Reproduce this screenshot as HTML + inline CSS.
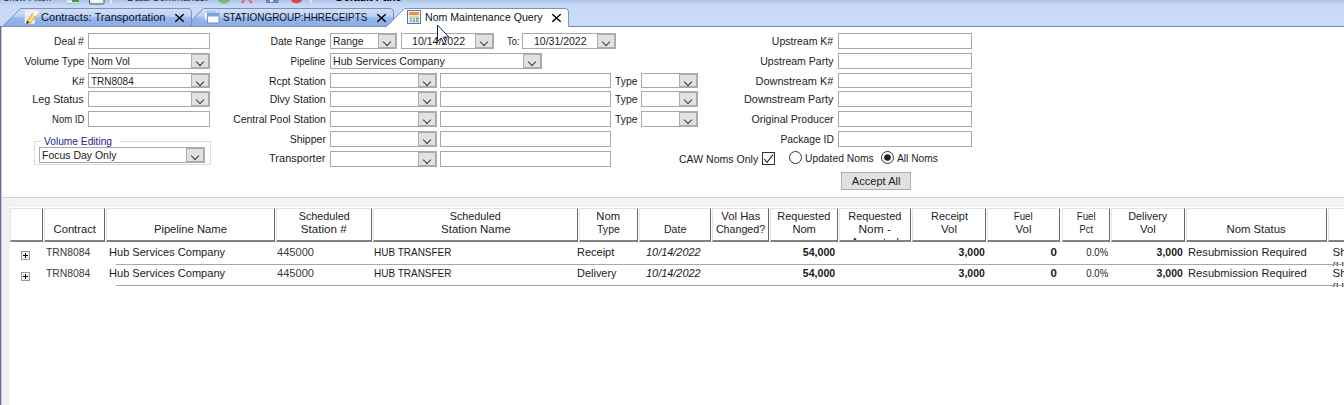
<!DOCTYPE html>
<html>
<head>
<meta charset="utf-8">
<title>Nom Maintenance Query</title>
<style>
*{box-sizing:border-box;margin:0;padding:0}
html,body{width:1344px;height:405px;overflow:hidden;background:#fff}
body{font-family:"Liberation Sans",sans-serif;font-size:11px;color:#1c1c1c;position:relative}
.abs{position:absolute}
#strip{position:absolute;left:0;top:0;width:1344px;height:27px;background:linear-gradient(#a9c3ea 0,#bed2f0 3px,#c9daf5 6px,#c9dbf8 26px)}
#stripline{position:absolute;left:0;top:26px;width:1344px;height:1px;background:#7688ad}
#leftedge{position:absolute;left:0;top:26px;width:1px;height:379px;background:#5f6f98}
#leftedge2{position:absolute;left:1px;top:27px;width:1px;height:378px;background:#c4cbdd}
#leftgray{position:absolute;left:2px;top:198px;width:8px;height:207px;background:#f3f3f3}
.tabt{position:absolute;font-size:11px;line-height:14px;white-space:nowrap;color:#0b1220}
.lbl{position:absolute;height:14px;line-height:14px;white-space:nowrap;text-align:right;font-size:11px}
.tb{position:absolute;border:1px solid #a9a9a9;background:#fff}
.cb{position:absolute;border:1px solid #a9a9a9;background:#fff;font-size:11px;padding-left:2px;white-space:nowrap;overflow:hidden}
.cb i{position:absolute;right:0;top:0;bottom:0;width:18px;background:#e1e1e1;border:1px solid #adadad}
.cb i:after{content:"";position:absolute;left:4.6px;top:4.1px;width:5px;height:5px;border-right:1px solid #3a3a3a;border-bottom:1px solid #3a3a3a;transform:rotate(45deg)}
.gh{position:absolute;top:208px;height:34px;background:#fff;border-left:1px solid #e4e4e4;border-top:1px solid #e4e4e4;border-right:1px solid #666;border-bottom:2px solid #828282;font-size:11.5px;line-height:13px;text-align:center;color:#222;overflow:hidden;white-space:nowrap}
.gc{position:absolute;height:14px;line-height:14px;font-size:11.5px;white-space:nowrap;color:#1a1a1a}
</style>
</head>
<body>
<div id="strip"></div>
<div id="stripline"></div>
<div id="leftedge"></div>
<div id="leftedge2"></div>
<div id="leftgray"></div>
<svg class="abs" style="left:0;top:0" width="1344" height="30" viewBox="0 0 1344 30">
<defs>
<linearGradient id="tg" x1="0" y1="8" x2="0" y2="26" gradientUnits="userSpaceOnUse">
<stop offset="0" stop-color="#d3e1f8"/><stop offset="0.45" stop-color="#bfd2f3"/><stop offset="0.55" stop-color="#98b6ec"/><stop offset="1" stop-color="#8aabe4"/>
</linearGradient>
</defs>
<path d="M185.5,26.5 L203.5,8.5 L390,8.5 Q393.5,8.5 393.5,12 L393.5,26.5 Z" fill="url(#tg)" stroke="#7a90be" stroke-width="1"/>
<path d="M2.5,26.5 L20.5,8.5 L188,8.5 Q191.5,8.5 191.5,12 L191.5,26.5 Z" fill="url(#tg)" stroke="#7a90be" stroke-width="1"/>
<path d="M386.5,26.5 L404.5,8.5 L565,8.5 Q568.5,8.5 568.5,12 L568.5,27.5 L386.5,27.5 Z" fill="#ffffff" stroke="none"/>
<path d="M386.5,26.5 L404.5,8.5 L565,8.5 Q568.5,8.5 568.5,12 L568.5,26.5" fill="none" stroke="#7a90be" stroke-width="1"/>
</svg>
<div class="tabt" style="left:40.5px;top:10px"><span style="display:inline-block;transform:scaleX(1.008);transform-origin:left center">Contracts: Transportation</span></div>
<div class="tabt" style="left:222.5px;top:10px"><span style="display:inline-block;transform:scaleX(0.900);transform-origin:left center">STATIONGROUP:HHRECEIPTS</span></div>
<div class="tabt" style="left:424.7px;top:10px"><span style="display:inline-block;transform:scaleX(0.961);transform-origin:left center">Nom Maintenance Query</span></div>
<svg class="abs" style="left:174px;top:13px" width="11" height="10"><path d="M1.3,1.3 L9.7,8.7 M9.7,1.3 L1.3,8.7" stroke="#000" stroke-width="1.5" fill="none"/></svg>
<svg class="abs" style="left:376px;top:13px" width="11" height="10"><path d="M1.3,1.3 L9.7,8.7 M9.7,1.3 L1.3,8.7" stroke="#000" stroke-width="1.5" fill="none"/></svg>
<svg class="abs" style="left:551px;top:13px" width="11" height="10"><path d="M1.3,1.3 L9.7,8.7 M9.7,1.3 L1.3,8.7" stroke="#000" stroke-width="1.5" fill="none"/></svg>
<div class="abs" style="left:3px;top:-10px;font-size:11px;line-height:14px;white-space:nowrap;color:#1a2540"><span style="display:inline-block;transform:scaleX(0.835);transform-origin:left center">Show Filter:</span></div>
<div class="abs" style="left:126.5px;top:-10px;font-size:11px;line-height:14px;white-space:nowrap;color:#1a2540"><span style="display:inline-block;transform:scaleX(0.946);transform-origin:left center">Data Commands:</span></div>
<div class="abs" style="left:336px;top:-10px;font-size:11px;line-height:14px;font-weight:bold;white-space:nowrap;color:#000"><span style="display:inline-block;transform:scaleX(0.983);transform-origin:left center">Default Pane</span></div>
<svg class="abs" style="left:60px;top:0" width="260" height="6" viewBox="60 0 260 6">
<path d="M66,0 H80 V1.5 Q80,3 78,3 H68 Q66,3 66,1.5 Z" fill="#f4f8f4" stroke="#8a9ab0" stroke-width="0.6"/>
<rect x="72" y="0" width="7" height="2" fill="#3f9a4a"/>
<path d="M89.5,0 V3 Q89.5,4 91,4 H102.500 Q104,4 104,3 V0" fill="#e9edf2" stroke="#4a5260" stroke-width="1"/>
<rect x="92" y="0" width="9.500" height="1.500" fill="#fff"/>
<rect x="110.500" y="0" width="1.200" height="3.500" fill="#f4f8ff"/>
<path d="M218.500,0 Q219,2.500 224,3.500 Q229,2.500 229.500,0 Z" fill="#7cc47a" stroke="#5aa060" stroke-width="0.6"/>
<path d="M241.500,3 L244.500,0 M252,3 L249,0" stroke="#e06a7a" stroke-width="2.200" fill="none"/>
<rect x="266" y="0" width="12.500" height="3" fill="#6f86c0"/>
<rect x="270" y="0" width="3" height="2" fill="#dfe7f7"/>
<path d="M291,0 Q292,3.200 296.500,3.200 Q301,3.200 302,0 Z" fill="#d8484a"/>
<rect x="310.300" y="0" width="1.200" height="3.500" fill="#f4f8ff"/>
</svg>
<svg class="abs" style="left:22px;top:8px" width="18" height="18" viewBox="22 8 18 18">
<rect x="24.800" y="10" width="9.700" height="13.500" fill="#eaf0fb"/>
<rect x="24.800" y="19" width="9.700" height="4.500" fill="#f8faff"/>
<path d="M28.600,22.300 L35,13.800" stroke="#caa546" stroke-width="5" stroke-linecap="butt" fill="none"/>
<path d="M28.600,22.300 L35,13.800" stroke="#f7d566" stroke-width="3.600" stroke-linecap="butt" fill="none"/>
<path d="M29.600,21.200 L34.400,14.800" stroke="#fbe69a" stroke-width="1.200" fill="none"/>
<path d="M35.100,13.600 L36,12.400" stroke="#fdf6f0" stroke-width="4.200" stroke-linecap="round" fill="none"/>
<path d="M25.800,24.300 L27,20.600 L30,22.800 Z" fill="#5a4424"/>
</svg>
<svg class="abs" style="left:203px;top:8px" width="18" height="18" viewBox="203 8 18 18">
<rect x="205" y="10.300" width="11.200" height="9" fill="#eff4fd" stroke="#dfe8f8" stroke-width="0.8"/>
<rect x="205.400" y="10.500" width="10.600" height="2.300" fill="#a9c2ea"/>
<rect x="207.500" y="13.500" width="11.500" height="9.500" fill="#fdfdff" stroke="#6f94d6" stroke-width="1"/>
<rect x="207.500" y="13.500" width="11.500" height="3" fill="#7da2e0"/>
</svg>
<svg class="abs" style="left:406px;top:9px" width="16" height="16" viewBox="406 9 16 16">
<rect x="407.500" y="10.500" width="13" height="13" fill="#fbfcff" stroke="#5672b6" stroke-width="1"/>
<rect x="409" y="12" width="10" height="3" fill="#f0913e"/>
<rect x="409" y="15.500" width="10" height="1.500" fill="#f8c8b0"/>
<rect x="409.500" y="17.500" width="2.500" height="2" fill="#7ab0a8"/><rect x="412.700" y="17.500" width="2.500" height="2" fill="#7ab0a8"/><rect x="416" y="17.500" width="2.800" height="2" fill="#5aa458"/>
<rect x="409.500" y="20.200" width="2.500" height="2" fill="#8ab8c8"/><rect x="412.700" y="20.200" width="2.500" height="2" fill="#6aa890"/><rect x="416" y="20.200" width="2.800" height="2" fill="#78b878"/>
</svg>
<div class="lbl" style="left:-116px;width:200px;top:34px;"><span style="display:inline-block;transform:scaleX(0.934);transform-origin:right center">Deal #</span></div>
<div class="lbl" style="left:-116px;width:200px;top:54px;"><span style="display:inline-block;transform:scaleX(0.946);transform-origin:right center">Volume Type</span></div>
<div class="lbl" style="left:-116px;width:200px;top:73.5px;"><span style="display:inline-block;transform:scaleX(0.935);transform-origin:right center">K#</span></div>
<div class="lbl" style="left:-116px;width:200px;top:91.8px;"><span style="display:inline-block;transform:scaleX(0.977);transform-origin:right center">Leg Status</span></div>
<div class="lbl" style="left:-116px;width:200px;top:112px;"><span style="display:inline-block;transform:scaleX(0.864);transform-origin:right center">Nom ID</span></div>
<div class="tb" style="left:88px;width:122px;top:33px;height:16px"></div>
<div class="cb" style="left:88px;width:122px;top:53px;height:16px;line-height:14px;"><span style="display:inline-block;transform:scaleX(0.936);transform-origin:left center">Nom Vol</span><i></i></div>
<div class="cb" style="left:88px;width:122px;top:73px;height:15px;line-height:14px;"><span style="display:inline-block;transform:scaleX(0.907);transform-origin:left center">TRN8084</span><i></i></div>
<div class="cb" style="left:88px;width:122px;top:91px;height:16px;line-height:14px;"><i></i></div>
<div class="tb" style="left:88px;width:122px;top:111px;height:16px"></div>
<div class="lbl" style="left:125.5px;width:200px;top:34px;"><span style="display:inline-block;transform:scaleX(0.942);transform-origin:right center">Date Range</span></div>
<div class="lbl" style="left:125.5px;width:200px;top:54px;"><span style="display:inline-block;transform:scaleX(0.884);transform-origin:right center">Pipeline</span></div>
<div class="lbl" style="left:125.5px;width:200px;top:73.5px;"><span style="display:inline-block;transform:scaleX(0.951);transform-origin:right center">Rcpt Station</span></div>
<div class="lbl" style="left:125.5px;width:200px;top:91.8px;"><span style="display:inline-block;transform:scaleX(0.954);transform-origin:right center">Dlvy Station</span></div>
<div class="lbl" style="left:125.5px;width:200px;top:112px;"><span style="display:inline-block;transform:scaleX(0.947);transform-origin:right center">Central Pool Station</span></div>
<div class="lbl" style="left:125.5px;width:200px;top:132px;"><span style="display:inline-block;transform:scaleX(0.957);transform-origin:right center">Shipper</span></div>
<div class="lbl" style="left:125.5px;width:200px;top:151px;"><span style="display:inline-block;transform:scaleX(0.999);transform-origin:right center">Transporter</span></div>
<div class="cb" style="left:330px;width:67px;top:33px;height:16px;line-height:14px;"><span style="display:inline-block;transform:scaleX(0.938);transform-origin:left center">Range</span><i></i></div>
<div class="cb" style="left:401px;width:93px;top:33px;height:16px;line-height:14px;padding-left:10px"><span style="display:inline-block;transform:scaleX(0.963);transform-origin:left center">10/14/2022</span><i></i></div>
<div class="lbl" style="left:507px;top:34px;text-align:left;"><span style="display:inline-block;transform:scaleX(0.851);transform-origin:left center">To:</span></div>
<div class="cb" style="left:522px;width:94px;top:33px;height:16px;line-height:14px;padding-left:11px"><span style="display:inline-block;transform:scaleX(0.953);transform-origin:left center">10/31/2022</span><i></i></div>
<div class="cb" style="left:330px;width:212px;top:53px;height:16px;line-height:14px;"><span style="display:inline-block;transform:scaleX(0.967);transform-origin:left center">Hub Services Company</span><i></i></div>
<div class="cb" style="left:330px;width:107px;top:73px;height:15px;line-height:14px;"><i></i></div>
<div class="tb" style="left:440px;width:171px;top:73px;height:15px"></div>
<div class="lbl" style="left:615px;top:73.5px;text-align:left;"><span style="display:inline-block;transform:scaleX(0.943);transform-origin:left center">Type</span></div>
<div class="cb" style="left:641px;width:57px;top:73px;height:15px;line-height:14px;"><i></i></div>
<div class="cb" style="left:330px;width:107px;top:91px;height:16px;line-height:14px;"><i></i></div>
<div class="tb" style="left:440px;width:171px;top:91px;height:16px"></div>
<div class="lbl" style="left:615px;top:91.8px;text-align:left;"><span style="display:inline-block;transform:scaleX(0.943);transform-origin:left center">Type</span></div>
<div class="cb" style="left:641px;width:57px;top:91px;height:16px;line-height:14px;"><i></i></div>
<div class="cb" style="left:330px;width:107px;top:111px;height:16px;line-height:14px;"><i></i></div>
<div class="tb" style="left:440px;width:171px;top:111px;height:16px"></div>
<div class="lbl" style="left:615px;top:112px;text-align:left;"><span style="display:inline-block;transform:scaleX(0.943);transform-origin:left center">Type</span></div>
<div class="cb" style="left:641px;width:57px;top:111px;height:16px;line-height:14px;"><i></i></div>
<div class="cb" style="left:330px;width:107px;top:131px;height:16px;line-height:14px;"><i></i></div>
<div class="tb" style="left:440px;width:171px;top:131px;height:16px"></div>
<div class="cb" style="left:330px;width:107px;top:151px;height:16px;line-height:14px;"><i></i></div>
<div class="tb" style="left:440px;width:171px;top:151px;height:16px"></div>
<div class="lbl" style="left:633.5px;width:200px;top:34px;"><span style="display:inline-block;transform:scaleX(0.956);transform-origin:right center">Upstream K#</span></div>
<div class="lbl" style="left:633.5px;width:200px;top:54px;"><span style="display:inline-block;transform:scaleX(0.958);transform-origin:right center">Upstream Party</span></div>
<div class="lbl" style="left:633.5px;width:200px;top:73.5px;"><span style="display:inline-block;transform:scaleX(0.993);transform-origin:right center">Downstream K#</span></div>
<div class="lbl" style="left:633.5px;width:200px;top:91.8px;"><span style="display:inline-block;transform:scaleX(0.989);transform-origin:right center">Downstream Party</span></div>
<div class="lbl" style="left:633.5px;width:200px;top:112px;"><span style="display:inline-block;transform:scaleX(0.959);transform-origin:right center">Original Producer</span></div>
<div class="lbl" style="left:633.5px;width:200px;top:132px;"><span style="display:inline-block;transform:scaleX(0.939);transform-origin:right center">Package ID</span></div>
<div class="tb" style="left:838px;width:134px;top:33px;height:16px"></div>
<div class="tb" style="left:838px;width:134px;top:53px;height:16px"></div>
<div class="tb" style="left:838px;width:134px;top:73px;height:15px"></div>
<div class="tb" style="left:838px;width:134px;top:91px;height:16px"></div>
<div class="tb" style="left:838px;width:134px;top:111px;height:16px"></div>
<div class="tb" style="left:838px;width:134px;top:131px;height:16px"></div>
<div class="abs" style="left:34px;top:141px;width:177px;height:24px;border:1px solid #dcdcdc"></div>
<div class="abs" style="left:42px;top:134px;height:14px;line-height:14px;padding:0 2px;background:#fff;color:#1c1c8a;font-size:11px;white-space:nowrap"><span style="display:inline-block;transform:scaleX(0.927);transform-origin:left center">Volume Editing</span></div>
<div class="cb" style="left:39px;width:166px;top:147px;height:16px;line-height:14px"><span style="display:inline-block;transform:scaleX(0.952);transform-origin:left center">Focus Day Only</span><i></i></div>
<div class="lbl" style="left:678.5px;top:152px;text-align:left;"><span style="display:inline-block;transform:scaleX(0.957);transform-origin:left center">CAW Noms Only</span></div>
<svg class="abs" style="left:762px;top:152px" width="13" height="13"><rect x="0.5" y="0.5" width="12" height="12" fill="#fff" stroke="#333"/><path d="M2.2,7 L5,10.3 L11.2,2.6" fill="none" stroke="#222" stroke-width="1.1"/></svg>
<svg class="abs" style="left:789px;top:151px" width="13" height="13"><circle cx="6.5" cy="6.5" r="6" fill="#fff" stroke="#333"/></svg>
<div class="lbl" style="left:805.4px;top:151px;text-align:left;"><span style="display:inline-block;transform:scaleX(0.935);transform-origin:left center">Updated Noms</span></div>
<svg class="abs" style="left:881px;top:151px" width="13" height="13"><circle cx="6.5" cy="6.5" r="6" fill="#fff" stroke="#333"/><circle cx="6.5" cy="6.5" r="3.3" fill="#222"/></svg>
<div class="lbl" style="left:897px;top:151px;text-align:left;"><span style="display:inline-block;transform:scaleX(0.931);transform-origin:left center">All Noms</span></div>
<div class="abs" style="left:841px;top:172px;width:70px;height:18px;border:1px solid #adadad;background:#e1e1e1;font-size:11px;line-height:16px;text-align:center"><span style="display:inline-block;transform:scaleX(1.008);transform-origin:center center">Accept All</span></div>
<div class="abs" style="left:2px;top:197px;width:1342px;height:1px;background:#d2d2d2"></div>
<div class="abs" style="left:2px;top:198px;width:1342px;height:9px;background:#f3f3f3"></div>
<div class="gh" style="left:10px;width:33px"><div style="margin-top:27px"></div></div>
<div class="gh" style="left:44px;width:61px"><div style="margin-top:14px"><span style="display:inline-block;transform:scaleX(0.975);transform-origin:center center">Contract</span></div></div>
<div class="gh" style="left:106px;width:169px"><div style="margin-top:14px"><span style="display:inline-block;transform:scaleX(0.976);transform-origin:center center">Pipeline Name</span></div></div>
<div class="gh" style="left:276px;width:96px"><div style="margin-top:1px"><span style="display:inline-block;transform:scaleX(0.938);transform-origin:center center">Scheduled</span><br><span style="display:inline-block;transform:scaleX(1.013);transform-origin:center center">Station #</span></div></div>
<div class="gh" style="left:373px;width:205px"><div style="margin-top:1px"><span style="display:inline-block;transform:scaleX(0.938);transform-origin:center center">Scheduled</span><br><span style="display:inline-block;transform:scaleX(0.997);transform-origin:center center">Station Name</span></div></div>
<div class="gh" style="left:579px;width:59px"><div style="margin-top:1px"><span style="display:inline-block;transform:scaleX(0.976);transform-origin:center center">Nom</span><br><span style="display:inline-block;transform:scaleX(0.922);transform-origin:center center">Type</span></div></div>
<div class="gh" style="left:639px;width:72px"><div style="margin-top:14px"><span style="display:inline-block;transform:scaleX(0.918);transform-origin:center center">Date</span></div></div>
<div class="gh" style="left:712px;width:57px"><div style="margin-top:1px"><span style="display:inline-block;transform:scaleX(0.984);transform-origin:center center">Vol Has</span><br><span style="display:inline-block;transform:scaleX(0.929);transform-origin:center center">Changed?</span></div></div>
<div class="gh" style="left:770px;width:68px"><div style="margin-top:1px"><span style="display:inline-block;transform:scaleX(0.953);transform-origin:center center">Requested</span><br><span style="display:inline-block;transform:scaleX(0.968);transform-origin:center center">Nom</span></div></div>
<div class="gh" style="left:839px;width:72px"><div style="margin-top:1px"><span style="display:inline-block;transform:scaleX(0.953);transform-origin:center center">Requested</span><br><span style="display:inline-block;transform:scaleX(1.035);transform-origin:center center">Nom -</span><br><span style="display:inline-block;transform:scaleX(1.001);transform-origin:center center">Accepted</span></div></div>
<div class="gh" style="left:912px;width:74px"><div style="margin-top:1px"><span style="display:inline-block;transform:scaleX(0.944);transform-origin:center center">Receipt</span><br><span style="display:inline-block;transform:scaleX(1.000);transform-origin:center center">Vol</span></div></div>
<div class="gh" style="left:987px;width:73px"><div style="margin-top:1px"><span style="display:inline-block;transform:scaleX(0.840);transform-origin:center center">Fuel</span><br><span style="display:inline-block;transform:scaleX(1.000);transform-origin:center center">Vol</span></div></div>
<div class="gh" style="left:1062px;width:48px"><div style="margin-top:1px"><span style="display:inline-block;transform:scaleX(0.840);transform-origin:center center">Fuel</span><br><span style="display:inline-block;transform:scaleX(0.806);transform-origin:center center">Pct</span></div></div>
<div class="gh" style="left:1111px;width:74px"><div style="margin-top:1px"><span style="display:inline-block;transform:scaleX(0.939);transform-origin:center center">Delivery</span><br><span style="display:inline-block;transform:scaleX(0.988);transform-origin:center center">Vol</span></div></div>
<div class="gh" style="left:1186px;width:141px"><div style="margin-top:14px"><span style="display:inline-block;transform:scaleX(0.985);transform-origin:center center">Nom Status</span></div></div>
<div class="gh" style="left:1328px;width:73px"><div style="margin-top:27px"></div></div>
<svg class="abs" style="left:21px;top:251px" width="9" height="9"><rect x="0.5" y="0.5" width="8" height="8" fill="#f4f4f4" stroke="#9a9a9a"/><path d="M2,4.5 H7 M4.5,2 V7" stroke="#000" stroke-width="1"/></svg>
<div class="gc" style="left:46.4px;top:244.5px;font-weight:normal;font-style:normal;color:#3a3a3a;"><span style="display:inline-block;transform:scaleX(0.898);transform-origin:left center">TRN8084</span></div>
<div class="gc" style="left:108.7px;top:244.5px;font-weight:normal;font-style:normal;"><span style="display:inline-block;transform:scaleX(0.961);transform-origin:left center">Hub Services Company</span></div>
<div class="gc" style="left:276.5px;top:244.5px;font-weight:normal;font-style:normal;color:#3a3a3a;"><span style="display:inline-block;transform:scaleX(0.964);transform-origin:left center">445000</span></div>
<div class="gc" style="left:374px;top:244.5px;font-weight:normal;font-style:normal;"><span style="display:inline-block;transform:scaleX(0.868);transform-origin:left center">HUB TRANSFER</span></div>
<div class="gc" style="left:577.4px;top:244.5px;font-weight:normal;font-style:normal;"><span style="display:inline-block;transform:scaleX(0.956);transform-origin:left center">Receipt</span></div>
<div class="gc" style="left:646px;top:244.5px;font-weight:normal;font-style:italic;"><span style="display:inline-block;transform:scaleX(0.949);transform-origin:left center">10/14/2022</span></div>
<div class="gc" style="left:635px;width:200px;top:244.5px;text-align:right;font-weight:bold;font-style:normal;"><span style="display:inline-block;transform:scaleX(0.921);transform-origin:right center">54,000</span></div>
<div class="gc" style="left:784.5px;width:200px;top:244.5px;text-align:right;font-weight:bold;font-style:normal;"><span style="display:inline-block;transform:scaleX(0.910);transform-origin:right center">3,000</span></div>
<div class="gc" style="left:857px;width:200px;top:244.5px;text-align:right;font-weight:bold;font-style:normal;">0</div>
<div class="gc" style="left:908.5999999999999px;width:200px;top:244.5px;text-align:right;font-weight:normal;font-style:normal;"><span style="display:inline-block;transform:scaleX(0.835);transform-origin:right center">0.0%</span></div>
<div class="gc" style="left:982.8px;width:200px;top:244.5px;text-align:right;font-weight:bold;font-style:normal;"><span style="display:inline-block;transform:scaleX(0.910);transform-origin:right center">3,000</span></div>
<div class="gc" style="left:1187.5px;top:244.5px;font-weight:normal;font-style:normal;"><span style="display:inline-block;transform:scaleX(0.973);transform-origin:left center">Resubmission Required</span></div>
<div class="gc" style="left:1332.6px;top:244.5px;font-weight:normal;font-style:normal;">Sh</div>
<div class="abs" style="left:1332px;top:259.1px;width:12px;height:7px;overflow:hidden"><div class="gc" style="left:0;top:0;position:relative">(H</div></div>
<div class="abs" style="left:116px;top:264px;width:1228px;height:1px;background:#a8a8a8"></div>
<svg class="abs" style="left:21px;top:272px" width="9" height="9"><rect x="0.5" y="0.5" width="8" height="8" fill="#f4f4f4" stroke="#9a9a9a"/><path d="M2,4.5 H7 M4.5,2 V7" stroke="#000" stroke-width="1"/></svg>
<div class="gc" style="left:46.4px;top:265.5px;font-weight:normal;font-style:normal;color:#3a3a3a;"><span style="display:inline-block;transform:scaleX(0.898);transform-origin:left center">TRN8084</span></div>
<div class="gc" style="left:108.7px;top:265.5px;font-weight:normal;font-style:normal;"><span style="display:inline-block;transform:scaleX(0.961);transform-origin:left center">Hub Services Company</span></div>
<div class="gc" style="left:276.5px;top:265.5px;font-weight:normal;font-style:normal;color:#3a3a3a;"><span style="display:inline-block;transform:scaleX(0.964);transform-origin:left center">445000</span></div>
<div class="gc" style="left:374px;top:265.5px;font-weight:normal;font-style:normal;"><span style="display:inline-block;transform:scaleX(0.868);transform-origin:left center">HUB TRANSFER</span></div>
<div class="gc" style="left:577.4px;top:265.5px;font-weight:normal;font-style:normal;"><span style="display:inline-block;transform:scaleX(0.953);transform-origin:left center">Delivery</span></div>
<div class="gc" style="left:646px;top:265.5px;font-weight:normal;font-style:italic;"><span style="display:inline-block;transform:scaleX(0.949);transform-origin:left center">10/14/2022</span></div>
<div class="gc" style="left:635px;width:200px;top:265.5px;text-align:right;font-weight:bold;font-style:normal;"><span style="display:inline-block;transform:scaleX(0.921);transform-origin:right center">54,000</span></div>
<div class="gc" style="left:784.5px;width:200px;top:265.5px;text-align:right;font-weight:bold;font-style:normal;"><span style="display:inline-block;transform:scaleX(0.910);transform-origin:right center">3,000</span></div>
<div class="gc" style="left:857px;width:200px;top:265.5px;text-align:right;font-weight:bold;font-style:normal;">0</div>
<div class="gc" style="left:908.5999999999999px;width:200px;top:265.5px;text-align:right;font-weight:normal;font-style:normal;"><span style="display:inline-block;transform:scaleX(0.835);transform-origin:right center">0.0%</span></div>
<div class="gc" style="left:982.8px;width:200px;top:265.5px;text-align:right;font-weight:bold;font-style:normal;"><span style="display:inline-block;transform:scaleX(0.910);transform-origin:right center">3,000</span></div>
<div class="gc" style="left:1187.5px;top:265.5px;font-weight:normal;font-style:normal;"><span style="display:inline-block;transform:scaleX(0.973);transform-origin:left center">Resubmission Required</span></div>
<div class="gc" style="left:1332.6px;top:265.5px;font-weight:normal;font-style:normal;">Sh</div>
<div class="abs" style="left:1332px;top:280.1px;width:12px;height:7px;overflow:hidden"><div class="gc" style="left:0;top:0;position:relative">(H</div></div>
<div class="abs" style="left:116px;top:285px;width:1228px;height:1px;background:#a8a8a8"></div>
<svg class="abs" style="left:435px;top:23px" width="18" height="24" viewBox="435 23 18 24">
<path d="M437.500,25 V41.500 L441.200,38 L443.700,43.800 L446,42.800 L443.500,37.200 L448.800,37 Z" fill="#fff" stroke="#14244e" stroke-width="1" stroke-linejoin="miter"/>
</svg>
</body>
</html>
